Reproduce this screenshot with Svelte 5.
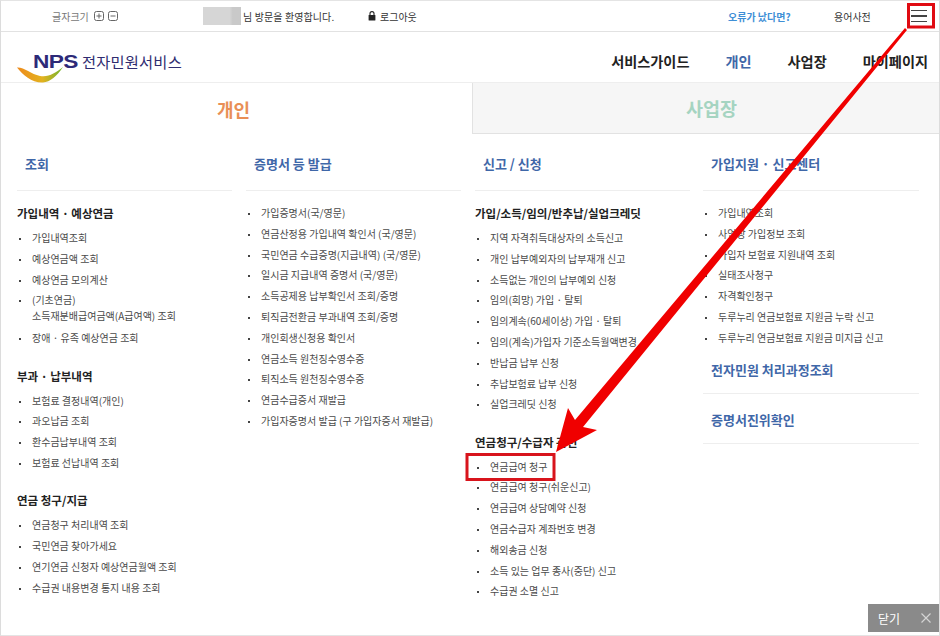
<script>
  const columns = [
    {
      heading: '조회',
      groups: [
        { title: '가입내역 · 예상연금', items: ['가입내역조회', '예상연금액 조회', '예상연금 모의계산', ['(기초연금)', '소득재분배급여금액(A급여액) 조회'], '장애 · 유족 예상연금 조회'] },
        { title: '부과 · 납부내역', items: ['보험료 결정내역(개인)', '과오납금 조회', '환수금납부내역 조회', '보험료 선납내역 조회'] },
        { title: '연금 청구/지급', items: ['연금청구 처리내역 조회', '국민연금 찾아가세요', '연기연금 신청자 예상연금월액 조회', '수급권 내용변경 통지 내용 조회'] }
      ]
    },
    {
      heading: '증명서 등 발급',
      groups: [
        { items: ['가입증명서(국/영문)', '연금산정용 가입내역 확인서 (국/영문)', '국민연금 수급증명(지급내역) (국/영문)', '일시금 지급내역 증명서 (국/영문)', '소득공제용 납부확인서 조회/증명', '퇴직금전환금 부과내역 조회/증명', '개인회생신청용 확인서', '연금소득 원천징수영수증', '퇴직소득 원천징수영수증', '연금수급증서 재발급', '가입자증명서 발급 (구 가입자증서 재발급)'] }
      ]
    },
    {
      heading: '신고 / 신청',
      groups: [
        { title: '가입/소득/임의/반추납/실업크레딧', items: ['지역 자격취득대상자의 소득신고', '개인 납부예외자의 납부재개 신고', '소득없는 개인의 납부예외 신청', '임의(희망) 가입 · 탈퇴', '임의계속(60세이상) 가입 · 탈퇴', '임의(계속)가입자 기준소득월액변경', '반납금 납부 신청', '추납보험료 납부 신청', '실업크레딧 신청'] },
        { title: '연금청구/수급자 관련', items: ['연금급여 청구', '연금급여 청구(쉬운신고)', '연금급여 상담예약 신청', '연금수급자 계좌번호 변경', '해외송금 신청', '소득 있는 업무 종사(중단) 신고', '수급권 소멸 신고'] }
      ]
    },
    {
      heading: '가입지원 · 신고센터',
      groups: [
        { items: ['가입내역조회', '사업장 가입정보 조회', '가입자 보험료 지원내역 조회', '실태조사청구', '자격확인청구', '두루누리 연금보험료 지원금 누락 신고', '두루누리 연금보험료 지원금 미지급 신고'] }
      ],
      extra: ['전자민원 처리과정조회', '증명서진위확인']
    }
  ];
</script>

<div class="page">
  <div class="topbar">
    <div class="font-size">
      <span>글자크기</span>
      <svg width="11" height="11" viewBox="0 0 11 11"><rect x="0.5" y="0.5" width="9" height="9" rx="2" fill="none" stroke="#666"/><path d="M2.5 5h5M5 2.5v5" stroke="#666"/></svg>
      <svg width="11" height="11" viewBox="0 0 11 11"><rect x="0.5" y="0.5" width="9" height="9" rx="2" fill="none" stroke="#666"/><path d="M2.5 5h5" stroke="#666"/></svg>
    </div>
    <div class="welcome"><span class="masked"></span><span>님 방문을 환영합니다.</span></div>
    <div class="logout">
      <svg width="8" height="10" viewBox="0 0 8 10"><path d="M2 4V2.6a2 2 0 0 1 4 0V4" fill="none" stroke="#222" stroke-width="1.1"/><rect x="0.6" y="4" width="6.8" height="5.6" rx="0.6" fill="#222"/></svg>
      <span>로그아웃</span>
    </div>
    <a class="error-link">오류가 났다면?</a>
    <span class="dict">용어사전</span>
    <button class="menu-btn" aria-label="메뉴"><i></i><i></i><i></i></button>
  </div>

  <header class="header">
    <div class="logo">
      <svg class="swoosh" width="48" height="28" viewBox="0 0 48 28">
        <defs>
          <linearGradient id="sw" x1="0" x2="1" y1="0" y2="0">
            <stop offset="0" stop-color="#ee8a1c"/>
            <stop offset="0.55" stop-color="#e3b21f"/>
            <stop offset="1" stop-color="#6fb52f"/>
          </linearGradient>
        </defs>
        <path d="M0 5.5 C7 5 14 12 23 14 C32 15.5 38 11 46 5 C40 14 33 20 26 20.5 C15 21 6 13 0 5.5Z" fill="url(#sw)"/>
      </svg>
      <span class="nps">NPS</span>
      <span class="logo-title">전자민원서비스</span>
    </div>
    <nav class="nav">
      <span>서비스가이드</span>
      <span class="active">개인</span>
      <span>사업장</span>
      <span>마이페이지</span>
    </nav>
  </header>

  <div class="tabs">
    <div class="tab on">개인</div>
    <div class="tab off">사업장</div>
  </div>

  <div class="columns">
    {#each columns as col}
      <section class="col">
        <h2 class="heading">{col.heading}</h2>
        {#each col.groups as group}
          <div class="group" class:plain={!group.title}>
            {#if group.title}<h3 class="title">{group.title}</h3>{/if}
            <ul>
              {#each group.items as item}
                {#if Array.isArray(item)}
                  <li class="double">{item[0]}<br />{item[1]}</li>
                {:else}
                  <li>{item}</li>
                {/if}
              {/each}
            </ul>
          </div>
        {/each}
        {#if col.extra}
          {#each col.extra as h}
            <h2 class="heading extra">{h}</h2>
          {/each}
        {/if}
      </section>
    {/each}
  </div>

  <button class="close">
    <span>닫기</span>
    <svg width="10" height="10" viewBox="0 0 10 10"><path d="M0.5 0.5l9 9M9.5 0.5l-9 9" stroke="#d4d4d4" stroke-width="1.2"/></svg>
  </button>

  <!-- annotation drawn over the page -->
  <svg class="annotation" width="940" height="636" viewBox="0 0 940 636">
    <rect x="908.5" y="4.5" width="25" height="22.5" fill="none" stroke="#e00b12" stroke-width="3"/>
    <rect x="467" y="454.5" width="87" height="25" fill="none" stroke="#d8141c" stroke-width="3"/>
    <path d="M905 28 L907 30 L583 427 L597 430 L556 452 L568 408 L575 420 Z" fill="#f00000"/>
  </svg>
</div>

<style>
  :global(body) {
    margin: 0;
    background: #fff;
  }

  .page {
    position: relative;
    width: 940px;
    height: 636px;
    box-sizing: border-box;
    overflow: hidden;
    border-left: 1px solid #dcdcdc;
    border-right: 1px solid #dcdcdc;
    border-top: 1px solid #e4e4e4;
    border-bottom: 1px solid #e4e4e4;
    font-family: "Noto Sans CJK KR", "Noto Sans", sans-serif;
    color: #444;
  }

  .topbar {
    display: flex;
    align-items: center;
    height: 30px;
    border-bottom: 1px solid #e2e2e2;
    font-size: 10px;
    color: #333;
  }

  .font-size {
    display: flex;
    align-items: center;
    gap: 3px;
    width: 202px;
    padding-left: 51px;
    box-sizing: border-box;
    color: #777;
  }

  .font-size span {
    margin-right: 2px;
  }

  .welcome {
    display: flex;
    align-items: center;
    width: 165px;
    letter-spacing: 0.1px;
  }

  .masked {
    display: block;
    width: 38px;
    height: 18px;
    margin-right: 2px;
    background: linear-gradient(90deg, #d6d6d6 0 70%, #c9c9c9 78%);
  }

  .logout {
    display: flex;
    align-items: center;
    gap: 4px;
    width: 360px;
  }

  .error-link {
    width: 106px;
    color: #3f8fd6;
    font-weight: 700;
  }

  .dict {
    width: 72px;
  }

  .menu-btn {
    display: flex;
    flex-direction: column;
    justify-content: center;
    gap: 4px;
    width: 26px;
    height: 24px;
    padding: 0 5px;
    border: 0;
    background: none;
  }

  .menu-btn i {
    display: block;
    height: 1.5px;
    background: #444;
  }

  .header {
    display: flex;
    align-items: center;
    justify-content: space-between;
    height: 42px;
    padding: 8px 11px 0 16px;
    border-bottom: 1px solid #eee;
  }

  .logo {
    display: flex;
    align-items: center;
    position: relative;
    padding-left: 16px;
  }

  .swoosh {
    position: absolute;
    left: 0;
    top: 12px;
  }

  .nps {
    position: relative;
    margin-top: 2px;
    font-family: "Liberation Sans", sans-serif;
    font-weight: 700;
    font-size: 18px;
    letter-spacing: -0.5px;
    transform: scaleX(1.26);
    transform-origin: left;
    color: #2d2a78;
    width: 49px;
  }

  .logo-title {
    font-size: 15.3px;
    color: #2f2c70;
    letter-spacing: 0.2px;
  }

  .nav {
    display: flex;
    gap: 36px;
    font-size: 14.2px;
    font-weight: 700;
    color: #222;
  }

  .nav .active {
    color: #3f67a8;
  }

  .tabs {
    display: flex;
    height: 51px;
  }

  .tab {
    display: flex;
    align-items: center;
    justify-content: center;
    font-size: 18px;
    font-weight: 700;
    box-sizing: border-box;
  }

  .tab.on {
    width: 471px;
    color: #e98f56;
    padding-right: 6px;
  }

  .tab.off {
    flex: 1;
    font-size: 18.5px;
    color: #a5d4c1;
    background: #f6f6f6;
    padding-left: 11px;
    border-left: 1px solid #e2e2e2;
    border-bottom: 1px solid #e2e2e2;
  }

  .columns {
    display: grid;
    grid-template-columns: repeat(4, 215px);
    column-gap: 14px;
    padding-left: 16px;
  }

  .col:last-child {
    margin-left: -1px;
  }

  .heading {
    margin: 0;
    height: 56px;
    line-height: 60px;
    padding-left: 8px;
    font-size: 13px;
    font-weight: 700;
    color: #3f67a8;
    border-bottom: 1px solid #eee;
  }

  .heading.extra {
    height: 49px;
    line-height: 51px;
  }

  .group:first-of-type {
    margin-top: 12px;
  }

  .group {
    padding-bottom: 16.5px;
  }

  .group.plain {
    padding-bottom: 0;
    margin-bottom: -5px;
  }

  .title {
    margin: 0;
    height: 21px;
    line-height: 21px;
    font-size: 11.5px;
    font-weight: 700;
    color: #222;
  }

  ul {
    list-style: none;
    margin: 4px 0 0;
    padding: 0;
  }

  .plain ul {
    margin-top: 2px;
  }

  li {
    position: relative;
    padding-left: 15px;
    line-height: 20.8px;
    font-size: 10px;
    color: #4a4a4a;
    white-space: nowrap;
  }

  li::before {
    content: '';
    position: absolute;
    left: 2px;
    top: 10px;
    width: 2px;
    height: 2px;
    background: #444;
  }

  li.double {
    line-height: 16px;
    padding: 2px 0 4px 15px;
  }

  .close {
    position: absolute;
    right: 0;
    bottom: 3px;
    display: flex;
    align-items: center;
    justify-content: space-between;
    width: 71px;
    height: 28px;
    padding: 0 8px 0 10px;
    box-sizing: border-box;
    border: 0;
    background: #8a8a8a;
    color: #fff;
    font-family: inherit;
    font-size: 12px;
  }

  .annotation {
    position: absolute;
    left: -1px;
    top: -1px;
    pointer-events: none;
  }
</style>
